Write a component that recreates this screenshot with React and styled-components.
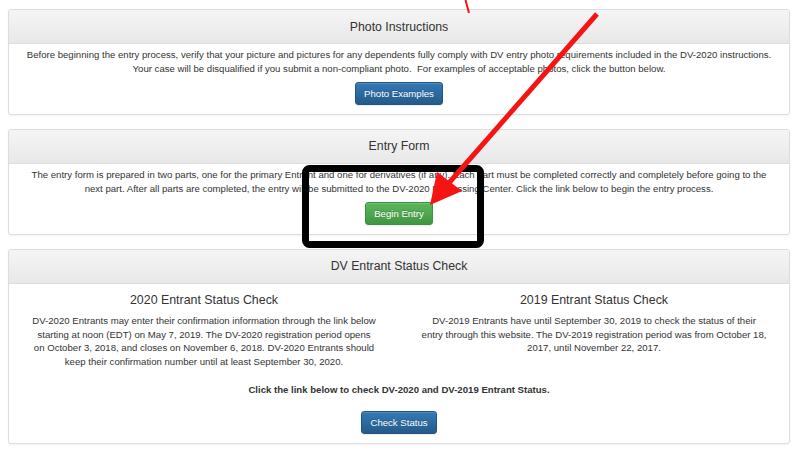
import styled, { createGlobalStyle, css } from "styled-components";

const GlobalStyle = createGlobalStyle`
  html, body {
    margin: 0;
    padding: 0;
    background: #fff;
  }
  body {
    font-family: "Liberation Sans", Arial, sans-serif;
    color: #333;
  }
`;

const Page = styled.div`
  position: relative;
  width: 800px;
  height: 462px;
  overflow: hidden;
  padding: 9px 10px 0 8px;
  box-sizing: border-box;
`;

const Panel = styled.section`
  border: 1px solid #ddd;
  border-radius: 3px;
  background: #fff;
  box-shadow: 0 1px 2px rgba(0, 0, 0, 0.05);
  margin-bottom: 14px;
`;

const Heading = styled.div`
  height: 33px;
  display: flex;
  align-items: center;
  justify-content: center;
  border-bottom: 1px solid #ddd;
  border-radius: 3px 3px 0 0;
  background: linear-gradient(to bottom, #f5f5f5 0%, #e8e8e8 100%);
  font-size: 12.3px;
  color: #333;
`;

const Body = styled.div`
  padding: ${(p) => (p.$split ? "10px 0 9px" : "4px 10px 9px")};
  text-align: center;
  font-size: 9.6px;
  line-height: 13.7px;
`;

const Text = styled.p`
  margin: 0 0 6.5px;
  white-space: nowrap;
  font-weight: ${(p) => (p.$bold ? "bold" : "normal")};
`;

const Columns = styled.div`
  display: grid;
  grid-template-columns: 1fr 1fr;
`;

const Column = styled.div`
  padding: 0 10px;
  text-align: center;
`;

const SubTitle = styled.h3`
  margin: 0 0 6.5px;
  font-size: 12.4px;
  font-weight: normal;
  line-height: 13.5px;
`;

const Note = styled(Text)`
  margin: 8px 0 14px;
`;

const variants = {
  primary: css`
    background: linear-gradient(to bottom, #337ab7 0%, #265a88 100%);
    border-color: #245580;
  `,
  success: css`
    background: linear-gradient(to bottom, #5cb85c 0%, #419641 100%);
    border-color: #3e8f3e;
  `,
};

const Button = styled.button`
  height: 23px;
  padding: 0 8px;
  border: 1px solid;
  border-radius: 3px;
  color: #fff;
  font-family: inherit;
  font-size: 9.6px;
  text-shadow: 0 -1px 0 rgba(0, 0, 0, 0.2);
  box-shadow: inset 0 1px 0 rgba(255, 255, 255, 0.15), 0 1px 1px rgba(0, 0, 0, 0.075);
  cursor: pointer;
  ${(p) => variants[p.$variant || "primary"]}
`;

const Marks = styled.svg`
  position: absolute;
  left: 0;
  top: 0;
  pointer-events: none;
`;

const Annotations = () => (
  <Marks width="800" height="462" viewBox="0 0 800 462">
    <line x1="465.5" y1="0" x2="469" y2="13" stroke="#f41414" strokeWidth="2" />
    <rect
      x="305.5"
      y="168.5"
      width="175"
      height="76"
      rx="4"
      fill="none"
      stroke="#000"
      strokeWidth="7"
    />
    <line
      x1="597"
      y1="14"
      x2="448"
      y2="184"
      stroke="#f41414"
      strokeWidth="5"
      strokeLinecap="butt"
    />
    <polygon points="430,205 437,172 462,191" fill="#f41414" />
  </Marks>
);

const App = () => {
  return (
    <Page>
      <GlobalStyle />

      <Panel>
        <Heading>Photo Instructions</Heading>
        <Body>
          <Text>
            Before beginning the entry process, verify that your picture and pictures for any
            dependents fully comply with DV entry photo requirements included in the DV-2020
            instructions.
            <br />
            Your case will be disqualified if you submit a non-compliant photo.&nbsp; For examples
            of acceptable photos, click the button below.
          </Text>
          <Button>Photo Examples</Button>
        </Body>
      </Panel>

      <Panel>
        <Heading>Entry Form</Heading>
        <Body>
          <Text>
            The entry form is prepared in two parts, one for the primary Entrant and one for
            derivatives (if any). Each part must be completed correctly and completely before going
            to the
            <br />
            next part. After all parts are completed, the entry will be submitted to the DV-2020
            Processing Center. Click the link below to begin the entry process.
          </Text>
          <Button $variant="success">Begin Entry</Button>
        </Body>
      </Panel>

      <Panel>
        <Heading>DV Entrant Status Check</Heading>
        <Body $split>
          <Columns>
            <Column>
              <SubTitle>2020 Entrant Status Check</SubTitle>
              <Text>
                DV-2020 Entrants may enter their confirmation information through the link below
                <br />
                starting at noon (EDT) on May 7, 2019. The DV-2020 registration period opens
                <br />
                on October 3, 2018, and closes on November 6, 2018. DV-2020 Entrants should
                <br />
                keep their confirmation number until at least September 30, 2020.
              </Text>
            </Column>
            <Column>
              <SubTitle>2019 Entrant Status Check</SubTitle>
              <Text>
                DV-2019 Entrants have until September 30, 2019 to check the status of their
                <br />
                entry through this website. The DV-2019 registration period was from October 18,
                <br />
                2017, until November 22, 2017.
              </Text>
            </Column>
          </Columns>
          <Note $bold>Click the link below to check DV-2020 and DV-2019 Entrant Status.</Note>
          <Button>Check Status</Button>
        </Body>
      </Panel>

      <Annotations />
    </Page>
  );
};

export default App;
